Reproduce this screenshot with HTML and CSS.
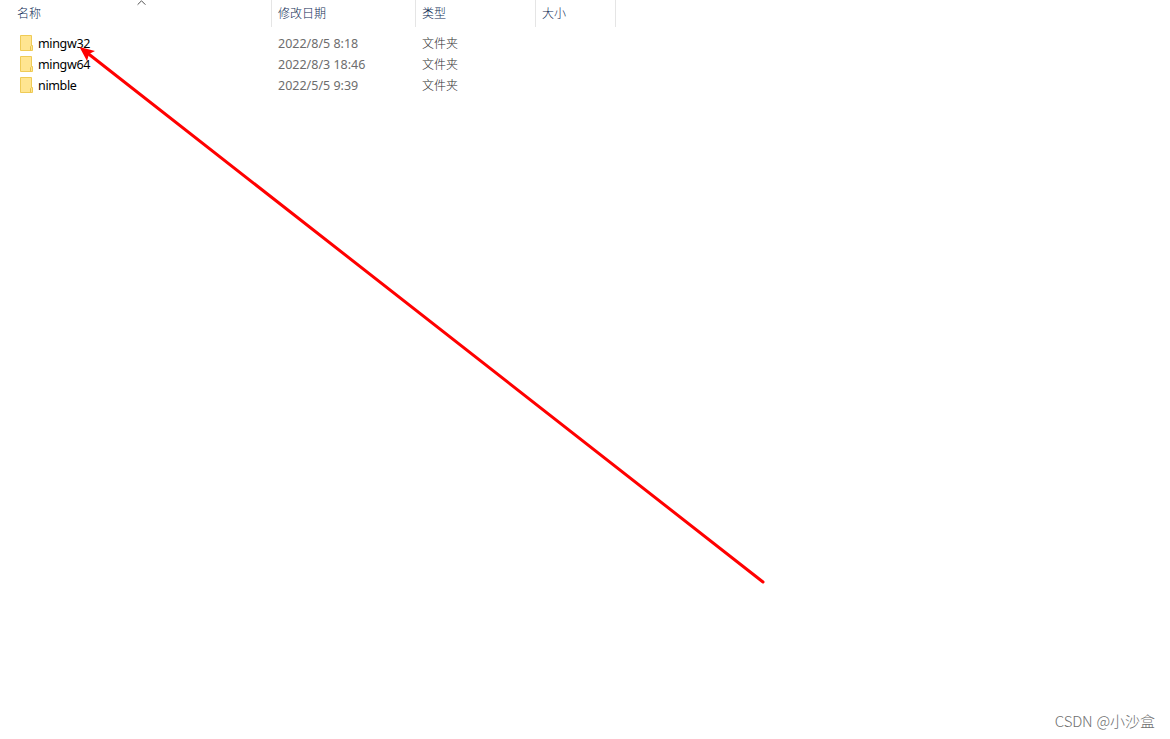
FILE: index.html
```html
<!DOCTYPE html>
<html lang="zh-CN">
  <head>
    <meta charset="utf-8" />
    <meta name="viewport" content="width=device-width, initial-scale=1" />
    <title>文件夹</title>
    <link rel="stylesheet" href="styles.css">
  </head>
  <body>
    <svg width="0" height="0" class="defs">
      <symbol id="folder" viewBox="0 0 14 17">
        <path d="M.5.5h11v10h1v5H.5z" fill="#ffe591" stroke="#efcb56" />
        <path d="M10.5 15.5v-4l1-1" fill="none" stroke="#e8c34c" />
      </symbol>
    </svg>

    <main class="file-list">
      <div class="list-header">
        <div class="header-cell">
          名称
          <svg class="sort-arrow" width="9" height="6" viewBox="0 0 9 6">
            <path d="M.6 4.7L4.5.8l3.9 3.9" fill="none" stroke="#505050" />
          </svg>
        </div>
        <div class="header-cell">修改日期</div>
        <div class="header-cell">类型</div>
        <div class="header-cell">大小</div>
      </div>

      <div class="row">
        <div class="name">
          <svg class="icon" width="14" height="17"><use href="#folder" /></svg>
          <span>mingw32</span>
        </div>
        <div class="date">2022/8/5 8:18</div>
        <div class="type">文件夹</div>
      </div>
      <div class="row">
        <div class="name">
          <svg class="icon" width="14" height="17"><use href="#folder" /></svg>
          <span>mingw64</span>
        </div>
        <div class="date">2022/8/3 18:46</div>
        <div class="type">文件夹</div>
      </div>
      <div class="row">
        <div class="name">
          <svg class="icon" width="14" height="17"><use href="#folder" /></svg>
          <span>nimble</span>
        </div>
        <div class="date">2022/5/5 9:39</div>
        <div class="type">文件夹</div>
      </div>
    </main>

    <svg class="pointer" width="1170" height="739" viewBox="0 0 1170 739">
      <path d="M88 53.5L763 582" stroke="#f00" stroke-width="3" stroke-linecap="round" />
      <path d="M79.5 47L95 51l-6 3-2 7z" fill="#f00" />
    </svg>

    <div class="watermark"><span class="latin">CSDN @</span>小沙盒</div>
  </body>
</html>
```

FILE: styles.css
```css
body {
  margin: 0;
  height: 739px;
  overflow: hidden;
  background: #fff;
  font-family: "Noto Sans", "Noto Sans CJK SC", sans-serif;
  font-size: 12.5px;
}

.defs {
  display: block;
}

.list-header,
.row {
  display: grid;
  grid-template-columns: 272px 144px 120px 80px;
}

.list-header {
  height: 27px;
  margin-bottom: 6px;
  color: #0f2c55;
  font-family: "Noto Sans CJK SC", sans-serif;
  font-size: 12px;
  font-weight: 300;
  line-height: 25px;
}

.header-cell {
  position: relative;
  padding-left: 6px;
  border-right: 1px solid #e5e5e5;
}

.header-cell:first-child {
  padding-left: 17px;
}

.sort-arrow {
  position: absolute;
  top: 0;
  left: 137px;
}

.row {
  height: 21px;
  line-height: 21px;
  color: #6d6d6d;
}

.name {
  display: flex;
  align-items: center;
  padding-left: 20px;
  color: #000;
  letter-spacing: -0.35px;
}

.icon {
  margin-right: 4px;
}

.date,
.type {
  padding-left: 6px;
}

.type {
  color: #2c2c2c;
  font-family: "Noto Sans CJK SC", sans-serif;
  font-size: 12px;
  font-weight: 300;
  line-height: 20px;
}

.pointer {
  position: absolute;
  top: 0;
  left: 0;
}

.watermark {
  position: absolute;
  right: 15px;
  bottom: 7px;
  color: #707070;
  font-family: "Noto Sans CJK SC", sans-serif;
  font-size: 15px;
  font-weight: 300;
  line-height: 22px;
}

.latin {
  letter-spacing: -0.2px;
  word-spacing: 1px;
}
```
